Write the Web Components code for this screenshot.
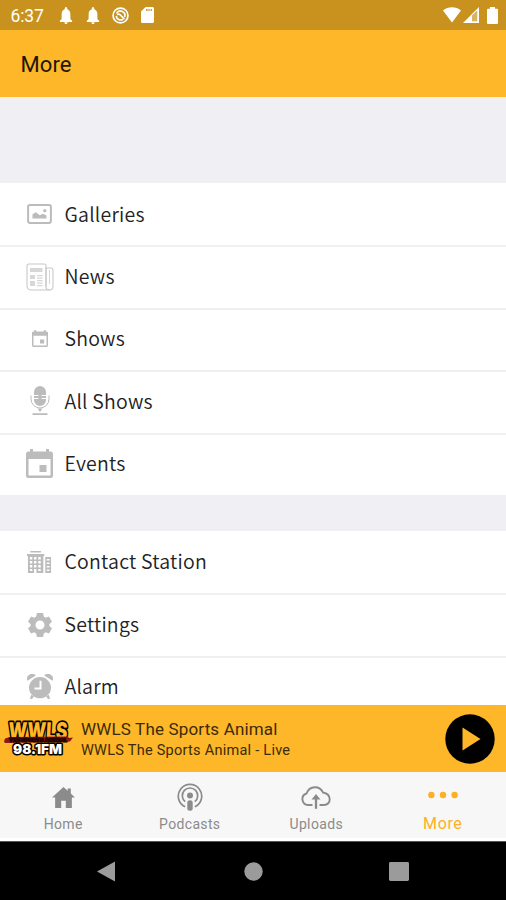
<!DOCTYPE html>
<html lang="en"><head><meta charset="utf-8"><title>More</title>
<style>html,body{margin:0;height:100%;overflow:hidden;background:#efeff4}body{font-family:Roboto,sans-serif}</style></head>
<body><radio-app></radio-app>
<script>
const icons = {
bell:['0 0 24 24','<path fill="currentColor" d="M12 24c1.600 0 2.800-1 2.800-2.500h-5.600C9.200 23 10.400 24 12 24zm7.500-7V10.500c0-3.700-2-6.400-5.300-7.300V2.300a2.200 2.200 0 0 0-4.400 0v.9c-3.300.9-5.300 3.600-5.300 7.300V17L1.500 19.500V21h21v-1.500z"/>'],
sync:['0 0 24 24','<g fill="none" stroke="currentColor" stroke-width="2.400"><circle cx="12" cy="12" r="10.500"/><path d="M6.500 9a6.200 6.200 0 0 1 11.300 5M15.500 17.200A6.200 6.200 0 0 1 6 12.500"/><path d="M7 10.500c3-1.500 4.500 0 5.500 1.500l5 5"/></g>'],
sd:['0 0 14 16','<path fill="currentColor" fill-rule="evenodd" d="M5 0h7.500A1.500 1.500 0 0 1 14 1.500v13a1.500 1.500 0 0 1-1.500 1.500h-11A1.500 1.500 0 0 1 0 14.500V4.500zM5.500 2v2H7V2zm2.500 0v2h1.300V2zm2.400 0v2h1.300V2z"/>'],
wifi:['0 0 18 16','<path fill="currentColor" d="M0 3.500C5-.9 13-.9 18 3.500L9 15.500z"/>'],
signal:['0 0 16 16','<path fill="currentColor" fill-rule="evenodd" d="M16 0v16H0zM9 8.500v5.700h5.200V3.500z"/><path fill="currentColor" opacity=".3" d="M9 8.500v5.700h5.200V3.500z"/>'],
battery:['0 0 11 17','<path fill="currentColor" d="M3 0h5v1.800h2a1 1 0 0 1 1 1V16a1 1 0 0 1-1 1H1a1 1 0 0 1-1-1V2.800a1 1 0 0 1 1-1h2z"/>'],
gallery:['0 0 25 20','<rect x="1.100" y="1.100" width="22.800" height="17.800" rx="1.800" fill="none" stroke="currentColor" stroke-width="2"/><path fill="currentColor" d="M5.500 14.500v-4.200l3.300-2 4 3 3-1.500 3.700 1.700v3z"/><circle cx="17.800" cy="6.700" r="1.600" fill="currentColor"/>'],
news:['0 0 28 28','<g fill="none" stroke="currentColor" stroke-width="1.100" opacity=".8"><path d="M20 23.500V3a2 2 0 0 0-2-2H3a2 2 0 0 0-2 2v20a4 4 0 0 0 4 4h18.500"/><path d="M20 5h5a2 2 0 0 1 2 2v16.500c0 4.600-7 4.600-7 0z"/><path d="M23.500 7v14" stroke-width=".8"/></g><path fill="currentColor" opacity=".6" d="M4 5h12.500v4H4zM4 12h5v4H4zm7 0h5.500v1.300H11zm0 2.500h5.500v1.300H11zM4 18h5v5H4zm7-1h5.500v1.300H11zm0 2.500h5.500v1.300H11zm0 2.500h5.500v1.300H11z"/>'],
cal:['0 0 27 29','<path fill="currentColor" fill-rule="evenodd" d="M4 0h3v2.500h13V0h3v2.500h1.500A2.500 2.500 0 0 1 27 5v21.500a2.500 2.500 0 0 1-2.500 2.500h-22A2.500 2.500 0 0 1 0 26.500V5a2.500 2.500 0 0 1 2.500-2.500H4zM2.500 10v16.500h22V10zM13.500 16h7v7h-7z"/>'],
mic:['0 0 20 30','<path fill="currentColor" d="M4 9V6a6 6 0 0 1 12 0v3h-4.500v1H16v2h-4.500v1H16v1a6 6 0 0 1-12 0v-1h4.500v-1H4v-2h4.500V9z"/><path d="M1 9.500V13a9 9 0 0 0 18 0V9.500M4 8h12M4 11.500h12" fill="none" stroke="currentColor" stroke-width="1"/><path fill="currentColor" d="M7.500 22.500h5L10 26zM2.500 27.300h15v1.700h-15z"/>'],
building:['0 0 26 24','<path fill="currentColor" fill-rule="evenodd" d="M3.500 1h11v1.500h-11zM0 4h18v2h-1v17H1V6H0zm3 3v2.500h2.500V7zm4.300 0v2.500h2.500V7zm4.400 0v2.500h2.600V7zM3 11v2.500h2.500V11zm4.300 0v2.500h2.500V11zm4.400 0v2.500h2.600V11zM3 15v2.500h2.500V15zm4.300 0v2.500h2.500V15zm4.400 0v2.500h2.600V15zM3 19v2h2.500v-2zm4.300 0v4h2.500v-4zm4.400 0v2h2.600v-2zM19 7h6v16h-6zm1.500 2v1.500h3V9zm0 3.500V14h3v-1.500zm0 3.500v1.500h3V16zm0 3.500V21h3v-1.500z"/>'],
gear:['0 0 24 24','<path fill="currentColor" fill-rule="evenodd" d="M8.900 0h6.200l.7 3.500 2 1.200 3.200-1.200L24 8.700l-2.600 2.200v2.200L24 15.300l-3 5.200-3.200-1.200-2 1.200-.7 3.500H8.900l-.7-3.500-2-1.200L3 20.500l-3-5.200 2.600-2.200v-2.200L0 8.700l3-5.200 3.200 1.200 2-1.200zM12 7.500a4.500 4.500 0 1 0 0 9 4.500 4.500 0 0 0 0-9z"/>'],
alarm:['0 0 26 26','<g fill="currentColor"><path d="M.5 7A5 5 0 0 1 8.800 1.600zM25.500 7a5 5 0 0 0-8.300-5.400z"/><path d="M4 21.500l3 2-2 2.500H3zM22 21.500l-3 2 2 2.500h2z"/><path fill-rule="evenodd" d="M13 3.200a11 11 0 1 0 0 22 11 11 0 0 0 0-22zM12.500 7h2v9h-7v-2h5z"/></g>'],
home:['0 0 22 20','<path fill="currentColor" d="M11 0l4 3.600V1.500h3v4.800L22 10h-3v10h-5.800v-7H8.800v7H3V10H0z"/>'],
podcast:['0 0 26 28','<g fill="none" stroke="currentColor" stroke-width="1.700"><path d="M8.200 23.800A11.700 11.700 0 1 1 17.800 23.800"/><path d="M8.200 18.700a7.700 7.700 0 1 1 9.600 0"/></g><circle cx="13" cy="12.600" r="3" fill="currentColor"/><rect x="10.300" y="17.200" width="5.400" height="10.500" rx="2.500" fill="currentColor"/>'],
cloud:['0 0 30 23','<path d="M11.500 19H7A5.900 5.900 0 0 1 5.500 7.500C8.500-1 19-.5 22 6.500c9 1.500 8.500 12.500 1 12.500h-4.500" fill="none" stroke="currentColor" stroke-width="1.900"/><path d="M15 22.800V12" stroke="currentColor" stroke-width="2.300"/><path fill="currentColor" d="M10.500 13.500L15 8l4.500 5.500z"/>'],
dots:['0 0 30 8','<g fill="currentColor"><circle cx="3.400" cy="4" r="3.200"/><circle cx="15" cy="4" r="3.200"/><circle cx="26.600" cy="4" r="3.200"/></g>'],
back:['0 0 18 22','<path fill="currentColor" d="M18 .5v21L0 11z"/>'],
circle:['0 0 20 20','<circle cx="10" cy="10" r="9.700" fill="currentColor"/>'],
square:['0 0 20 20','<rect width="20" height="20" rx="1.500" fill="currentColor"/>'],
play:['0 0 50 50','<circle cx="25" cy="25" r="24.700" fill="#000"/><path d="M17.500 13.500L35.500 25l-18 11.500z" fill="#fdb728"/>']
};
const define=(name,fn)=>customElements.define(name,class extends HTMLElement{
 connectedCallback(){ if(!this.shadowRoot) this.attachShadow({mode:'open'}).innerHTML=fn(this); }
});
define('ui-icon',e=>{const [vb,body]=icons[e.getAttribute('name')];
 return `<style>:host{display:block;flex:none}svg{display:block}</style><svg width="${e.getAttribute('w')}" height="${e.getAttribute('h')}" viewBox="${vb}" preserveAspectRatio="none">${body}</svg>`});
define('status-bar',()=>`<style>:host{display:flex;height:30px;background:#c9921f;color:#fff;align-items:center;padding:0 8px 0 10.500px;box-sizing:border-box;font-size:17.500px}
 .time{width:48px;padding-top:2px;letter-spacing:-.1px}.l{display:flex;align-items:center;flex:1;gap:13px}.r{display:flex;align-items:center}</style>
 <span class="time">6:37</span><div class="l"><ui-icon name="bell" w="14" h="17"></ui-icon><ui-icon name="bell" w="14" h="17"></ui-icon><ui-icon name="sync" w="17" h="17" style="margin-left:-1px"></ui-icon><ui-icon name="sd" w="13" h="16" style="margin-left:-1px"></ui-icon></div>
 <div class="r"><ui-icon name="wifi" w="18" h="16"></ui-icon><ui-icon name="signal" w="16" h="16" style="margin:0 8px 0 2px"></ui-icon><ui-icon name="battery" w="11" h="17"></ui-icon></div>`);
define('title-bar',()=>`<style>:host{display:flex;height:67px;background:#fdb728;align-items:center;padding-left:20.500px;font-size:22px;color:#1e1604;letter-spacing:.1px}span{padding-top:1px}</style><span><slot></slot></span>`);
define('menu-row',e=>`<style>:host{display:flex;height:62.400px;box-sizing:border-box;background:#fff;align-items:center;color:#bcbcbc;box-shadow:inset 0 2px #f0f0f2}
 :host(:first-child){box-shadow:none}
 .i{width:64.500px;padding-left:14.500px;box-sizing:border-box;display:flex;justify-content:center}span{font:350 19.500px/30px "Noto Sans CJK SC",sans-serif;color:#222;letter-spacing:.22px;margin-bottom:1.400px}</style>
 <div class="i"><ui-icon name="${e.getAttribute('icon')}" w="${e.getAttribute('w')}" h="${e.getAttribute('h')}"></ui-icon></div><span><slot></slot></span>`);
define('menu-list',()=>`<style>:host{display:block}</style><slot></slot>`);
define('station-logo',()=>`<style>:host{display:block}svg{display:block;overflow:visible}text{font-family:Inter,"DejaVu Sans",sans-serif;font-weight:900;paint-order:stroke;stroke:#000;stroke-linejoin:round}</style>
 <svg width="72" height="40" viewBox="0 0 72 40"><text x="7" y="15" textLength="59" lengthAdjust="spacingAndGlyphs" font-size="17" fill="#fdb728" stroke-width="2.600" transform="skewX(-3) scale(1 1.350)">WWLS</text>
 <path d="M3 19.500l5-1.500 58-.5 1 1.500 4-.5-3 4-65 1.500-1-1.500z" fill="#8f1518"/><text x="7" y="23" textLength="58" lengthAdjust="spacingAndGlyphs" font-size="5" fill="#3d0808" stroke="none">THE SPORTS ANIMAL</text>
 <text x="11" y="35" textLength="49" lengthAdjust="spacingAndGlyphs" font-size="13.500" fill="#fff" stroke-width="3">98.1FM</text></svg>`);
define('now-playing',()=>`<style>:host{display:flex;height:67px;background:#fdb728;align-items:center;padding:0 11px 0 2px;color:#3b2b0a;box-sizing:border-box}
 .t{flex:1;padding:3px 0 0 7px}.a{font-size:17px;line-height:21px;letter-spacing:.16px}.b{font-size:14.500px;line-height:22px;letter-spacing:.26px}</style>
 <station-logo></station-logo><div class="t"><div class="a">WWLS The Sports Animal</div><div class="b">WWLS The Sports Animal - Live</div></div><ui-icon name="play" w="50" h="50"></ui-icon>`);
define('tab-item',e=>`<style>:host{display:flex;flex:1;flex-direction:column;align-items:center;color:#8b8b8b;font-size:14px;letter-spacing:.35px}:host([active]){color:#fdb022;font-size:16px}
 .i{height:30px;display:flex;align-items:center;margin-top:10px}span{line-height:20px;margin-top:2px}:host([active]) .i{height:26px}:host([active]) span{margin-top:6px;letter-spacing:.6px}</style>
 <div class="i"><ui-icon name="${e.getAttribute('icon')}" w="${e.getAttribute('w')}" h="${e.getAttribute('h')}"></ui-icon></div><span><slot></slot></span>`);
define('tab-bar',()=>`<style>:host{display:flex;height:69px;background:#f7f7f7;border-bottom:3px solid #fff;box-sizing:border-box}</style>
 <tab-item icon="home" w="23" h="21">Home</tab-item><tab-item icon="podcast" w="26" h="28">Podcasts</tab-item><tab-item icon="cloud" w="30" h="23">Uploads</tab-item><tab-item active icon="dots" w="30" h="8">More</tab-item>`);
define('nav-bar',()=>`<style>:host{display:flex;height:59px;background:#000;color:#9b9b9b;align-items:center;padding:0 97px;justify-content:space-between;border-top:1px solid #555;box-sizing:border-box}</style>
 <ui-icon name="back" w="18" h="21"></ui-icon><ui-icon name="circle" w="19" h="19" style="margin-left:2px"></ui-icon><ui-icon name="square" w="20" h="19"></ui-icon>`);
define('radio-app',()=>`<style>:host{display:flex;flex-direction:column;height:900px;width:506px;overflow:hidden}.scroll{flex:1;min-height:0;overflow:hidden;background:#efeff4;padding-top:86px;display:flex;flex-direction:column;gap:36px}menu-list{flex:none}</style>
 <status-bar></status-bar><title-bar>More</title-bar><div class="scroll">
 <menu-list><menu-row icon="gallery" w="25" h="20">Galleries</menu-row><menu-row icon="news" w="28" h="28">News</menu-row><menu-row icon="cal" w="16" h="17">Shows</menu-row><menu-row icon="mic" w="20" h="30">All Shows</menu-row><menu-row icon="cal" w="27" h="29">Events</menu-row></menu-list>
 <menu-list><menu-row icon="building" w="25" h="24">Contact Station</menu-row><menu-row icon="gear" w="24" h="24">Settings</menu-row><menu-row icon="alarm" w="26" h="25">Alarm</menu-row></menu-list></div>
 <now-playing></now-playing><tab-bar></tab-bar><nav-bar></nav-bar>`);
</script></body></html>
